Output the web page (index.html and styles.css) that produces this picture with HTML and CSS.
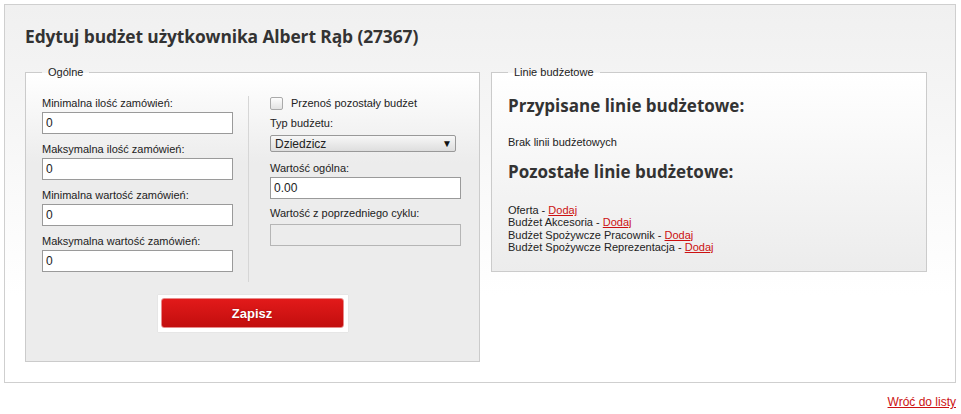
FILE: index.html
```html
<!DOCTYPE html>
<html lang="pl">
<head>
  <meta charset="UTF-8">
  <title>Edytuj budżet użytkownika</title>
  <link rel="stylesheet" href="styles.css">
</head>
<body>
  <div class="box">
    <h1>Edytuj budżet użytkownika Albert Rąb (27367)</h1>

    <div class="panels">
      <fieldset class="general">
        <legend>Ogólne</legend>
        <div class="cols">
          <div class="col col-left">
            <div class="field">
              <label for="min-qty">Minimalna ilość zamówień:</label>
              <input type="text" id="min-qty" value="0">
            </div>
            <div class="field">
              <label for="max-qty">Maksymalna ilość zamówień:</label>
              <input type="text" id="max-qty" value="0">
            </div>
            <div class="field">
              <label for="min-val">Minimalna wartość zamówień:</label>
              <input type="text" id="min-val" value="0">
            </div>
            <div class="field">
              <label for="max-val">Maksymalna wartość zamówień:</label>
              <input type="text" id="max-val" value="0">
            </div>
          </div>
          <div class="col col-right">
            <div class="check-row">
              <input type="checkbox" id="carry-over">
              <label for="carry-over">Przenoś pozostały budżet</label>
            </div>
            <label for="budget-type" class="lbl-type">Typ budżetu:</label>
            <div class="select-wrap">
              <select id="budget-type">
                <option>Dziedzicz</option>
              </select>
              <span class="arrow">&#9660;</span>
            </div>
            <label for="total" class="lbl-total">Wartość ogólna:</label>
            <input type="text" id="total" class="wide" value="0.00">
            <label for="prev" class="lbl-prev">Wartość z poprzedniego cyklu:</label>
            <input type="text" id="prev" class="wide" disabled>
          </div>
        </div>
        <div class="actions">
          <span class="btn-frame"><button class="btn">Zapisz</button></span>
        </div>
      </fieldset>

      <fieldset class="lines">
        <legend>Linie budżetowe</legend>
        <h2>Przypisane linie budżetowe:</h2>
        <p class="empty">Brak linii budżetowych</p>
        <h2>Pozostałe linie budżetowe:</h2>
        <ul class="line-list">
          <li>Oferta - <a href="#">Dodaj</a></li>
          <li>Budżet Akcesoria - <a href="#">Dodaj</a></li>
          <li>Budżet Spożywcze Pracownik - <a href="#">Dodaj</a></li>
          <li>Budżet Spożywcze Reprezentacja - <a href="#">Dodaj</a></li>
        </ul>
      </fieldset>
    </div>
  </div>

  <div class="back">
    <a href="#">Wróć do listy</a>
  </div>
</body>
</html>
```

FILE: styles.css
```css
body {
  margin: 0;
  padding: 4px 5px 0 4px;
  font-family: "Liberation Sans", Arial, sans-serif;
  font-size: 11px;
  color: #222;
  background: #fff;
}
a {
  color: #cc1111;
}
.box {
  height: 377px;
  border: 1px solid #cfcfcf;
  background: linear-gradient(#f0f0f0 0, #fff 290px);
  padding: 0 20px;
}
h1 {
  margin: 0;
  padding: 19px 0 0;
  height: 42px;
  font-family: "Open Sans", sans-serif;
  font-size: 17.4px;
  font-weight: 700;
  color: #333;
  letter-spacing: -0.1px;
}
.panels {
  display: flex;
  align-items: flex-start;
  gap: 11px;
}
fieldset {
  margin: 0;
  border: 1px solid #cbcbcb;
  padding: 0 16px;
}
legend {
  padding: 0 6px;
  margin-left: 0;
  font-size: 11px;
  color: #222;
}
.general {
  width: 421px;
  height: 294px;
  background: linear-gradient(#fff 0, #ececec 90px);
}
.cols {
  display: flex;
  margin-top: 18px;
}
.col-left {
  width: 206px;
  border-right: 1px solid #d6d6d6;
  padding-bottom: 10px;
}
.col-right {
  padding-left: 21px;
  display: flex;
  flex-direction: column;
  align-items: flex-start;
}
label {
  display: block;
  line-height: 14px;
}
.field {
  margin-bottom: 8px;
}
.field:last-child {
  margin-bottom: 0;
}
.field label {
  margin-bottom: 2px;
}
input[type="text"] {
  box-sizing: border-box;
  width: 191px;
  height: 22px;
  margin: 0;
  padding: 2px 3px;
  border: 1px solid #9a9a9a;
  background: #fff;
  font-family: "Liberation Sans", Arial, sans-serif;
  font-size: 12px;
  color: #222;
}
input.wide {
  width: 191px;
}
input[disabled] {
  background: #ececec;
  border-color: #b5b5b5;
}
.check-row {
  display: flex;
  align-items: center;
  height: 14px;
  gap: 8px;
}
.check-row input {
  appearance: none;
  box-sizing: border-box;
  width: 13px;
  height: 13px;
  margin: 0;
  border: 1px solid #aaa;
  border-radius: 2px;
  background: linear-gradient(#fdfdfd, #e2e2e2);
}
.lbl-type {
  margin-top: 6px;
}
.select-wrap {
  position: relative;
  margin-top: 5px;
}
.select-wrap select {
  appearance: none;
  box-sizing: border-box;
  width: 186px;
  height: 17px;
  margin: 0;
  padding: 0 0 0 4px;
  border: 1px solid #999;
  border-radius: 2px;
  background: linear-gradient(#f7f7f7, #dedede);
  font-family: "Liberation Sans", Arial, sans-serif;
  font-size: 12px;
  color: #222;
}
.select-wrap .arrow {
  position: absolute;
  right: 4px;
  top: 3px;
  font-size: 10px;
  line-height: 11px;
  color: #111;
  pointer-events: none;
}
.lbl-total {
  margin-top: 9px;
  margin-bottom: 2px;
}
.lbl-prev {
  margin-top: 7px;
  margin-bottom: 4px;
}
.actions {
  display: flex;
  justify-content: center;
  margin-top: 13px;
}
.btn-frame {
  display: inline-block;
  padding: 3px 4px 4px 3px;
  background: #fff;
  box-shadow: 0 0 1px rgba(0, 0, 0, 0.15);
}
.btn {
  display: block;
  width: 183px;
  height: 30px;
  border: 1px solid #e88a8a;
  border-radius: 3px;
  background: linear-gradient(#e21a1a, #c20e0e);
  color: #fff;
  font-family: "Liberation Sans", Arial, sans-serif;
  font-size: 13px;
  font-weight: 700;
  text-shadow: 0 0 2px rgba(120, 0, 0, 0.6);
  cursor: pointer;
}
.lines {
  width: 402px;
  height: 204px;
  background: linear-gradient(#fff 0, #ececec 100%);
}
.lines h2 {
  margin: 16px 0 0;
  font-family: "Open Sans", sans-serif;
  font-size: 17px;
  font-weight: 700;
  color: #333;
  line-height: 24px;
}
.lines .empty {
  margin: 17px 0 0;
  line-height: 14px;
}
.lines .empty + h2 {
  margin-top: 11px;
}
.line-list {
  list-style: none;
  margin: 20px 0 0;
  padding: 0;
  line-height: 12.4px;
}
.back {
  text-align: right;
  margin-top: 12px;
  font-size: 12px;
}
```
